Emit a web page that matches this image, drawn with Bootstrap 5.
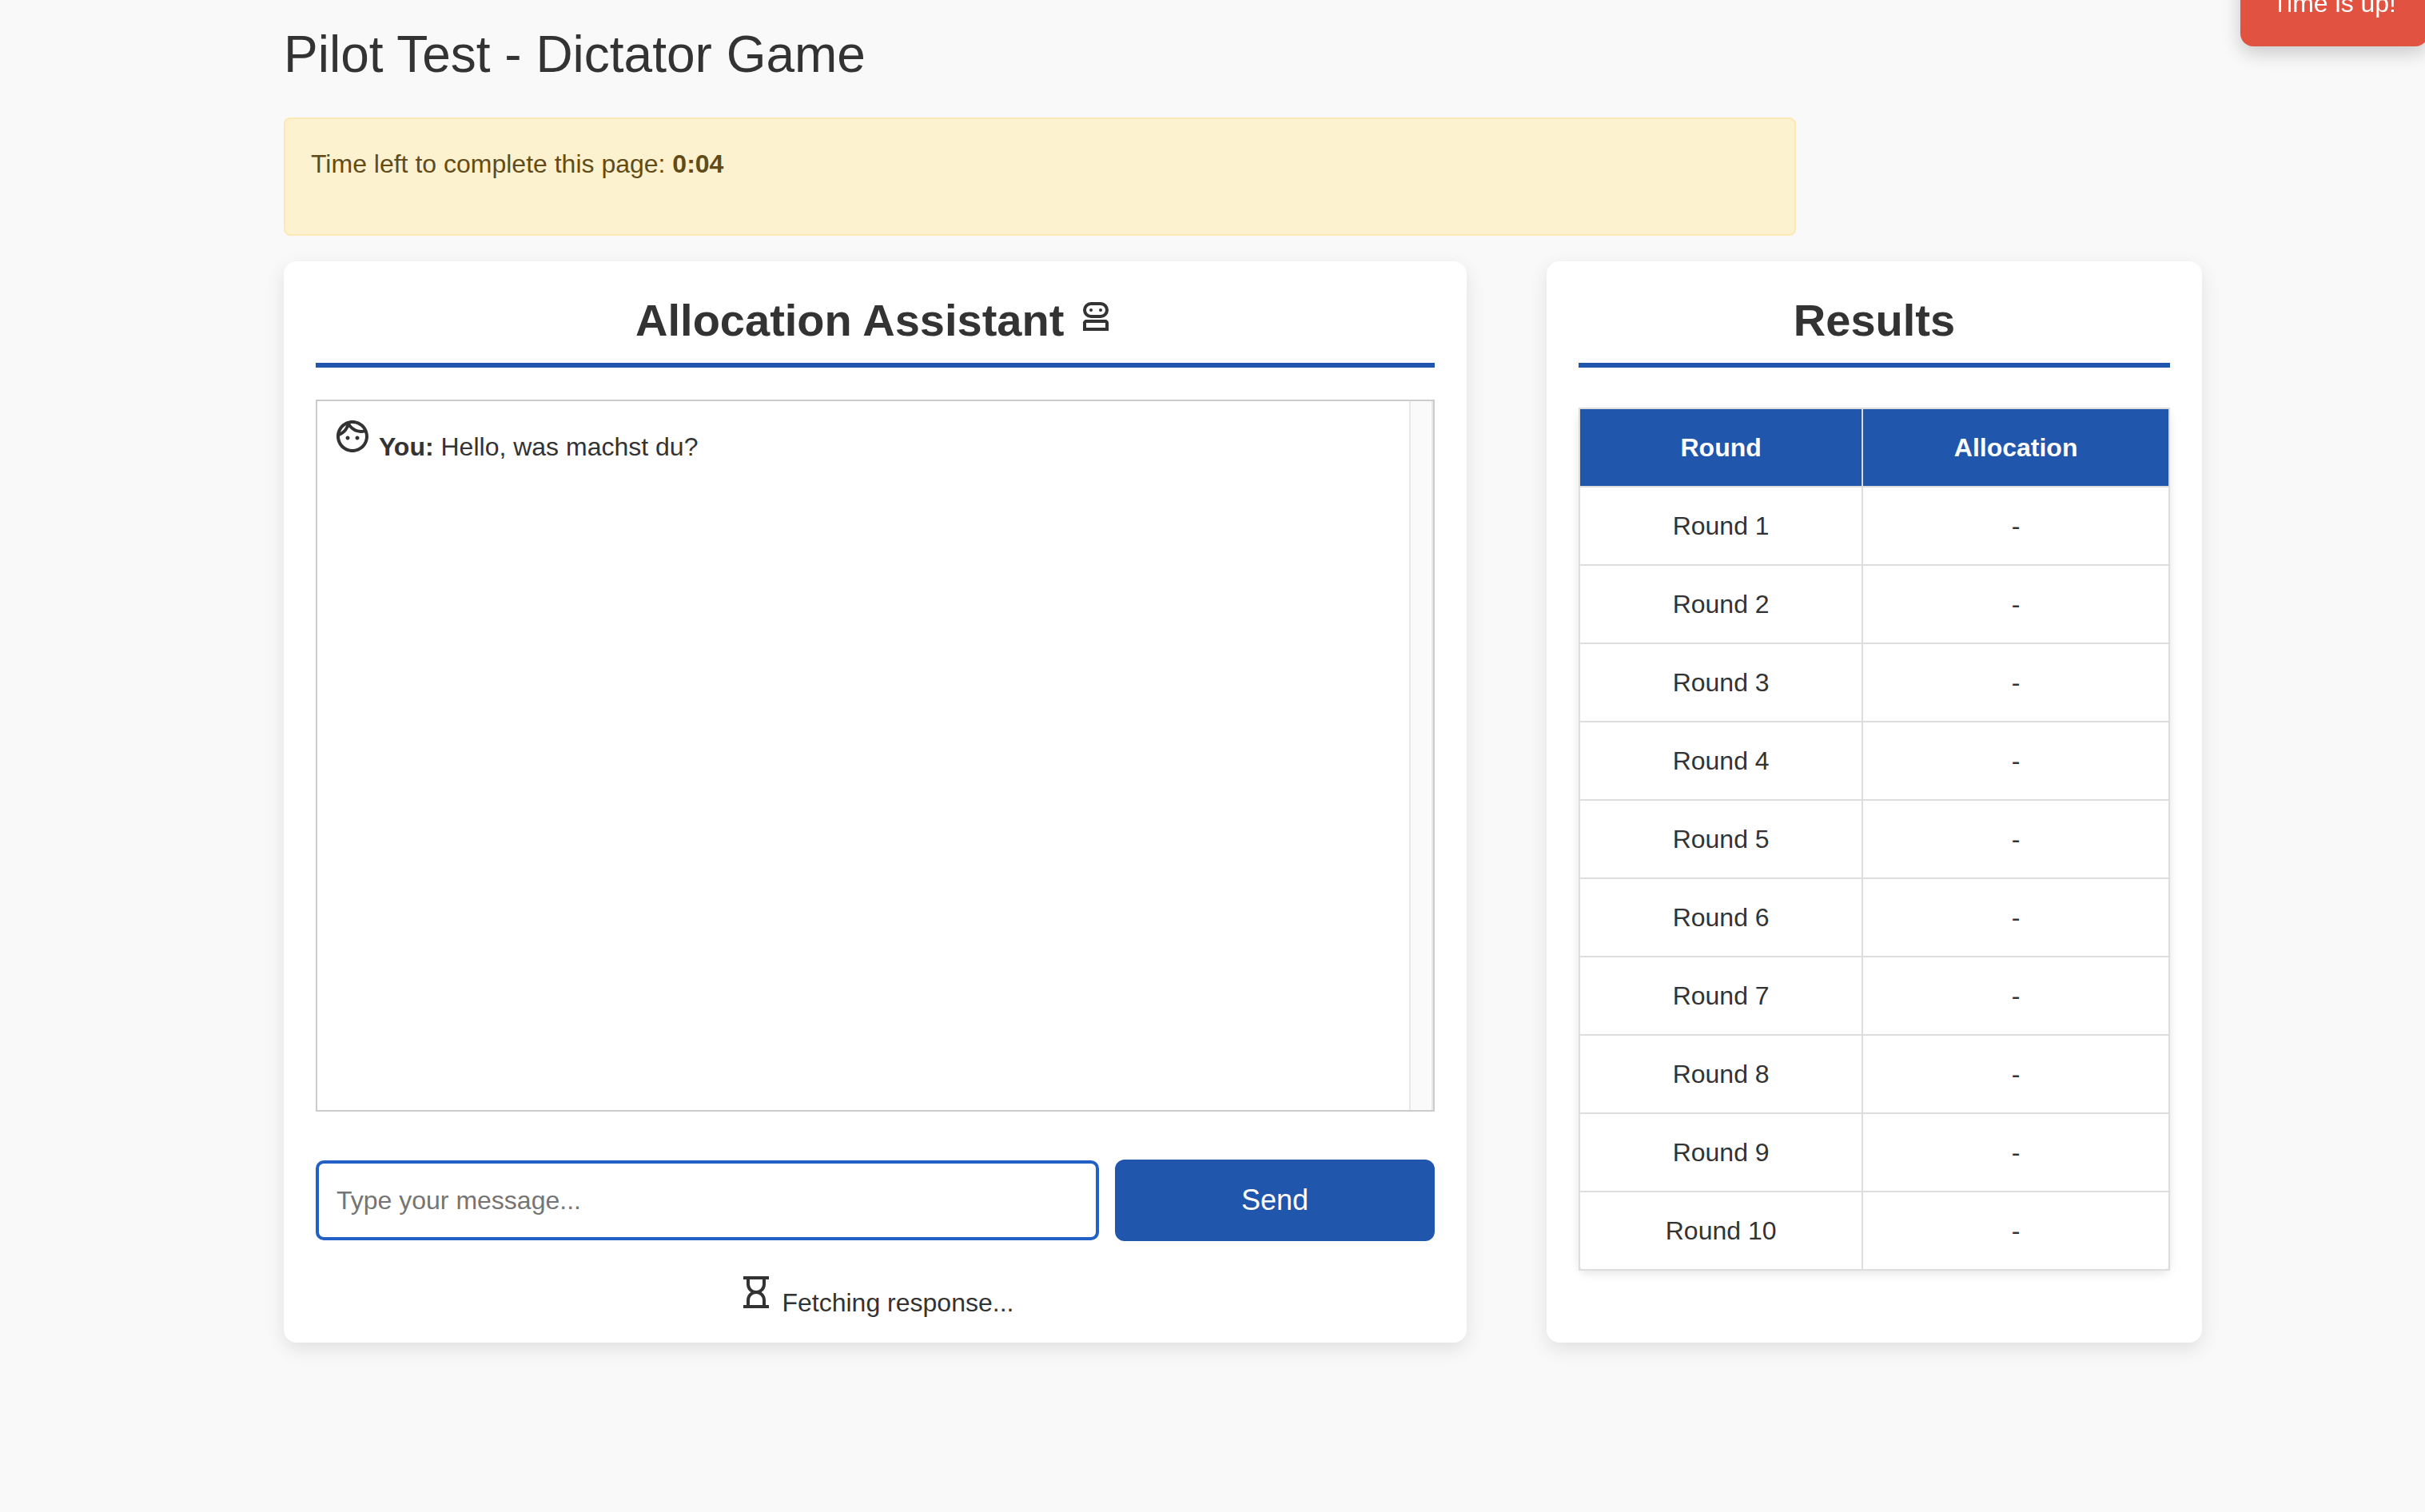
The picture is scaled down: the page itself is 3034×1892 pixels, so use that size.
<!DOCTYPE html>
<html lang="en">
<head>
<meta charset="utf-8">
<meta name="viewport" content="width=device-width, initial-scale=1">
<title>Pilot Test - Dictator Game</title>
<link href="https://cdn.jsdelivr.net/npm/bootstrap@5.3.0/dist/css/bootstrap.min.css" rel="stylesheet">
<style>
  :root { --brand: #2056ab; --ink: #333; }
  body {
    background: #f9f9f9;
    color: var(--ink);
    font-family: "Liberation Sans", Arial, sans-serif;
    font-size: 32px;
    line-height: 48px;
  }
  .page { max-width: 3034px; padding: 30px 279px 80px 355px; }
  .page-title { font-size: 64px; line-height: 77px; margin-bottom: 40px; color: var(--ink); }
  .timer-alert {
    max-width: 1892px;
    padding: 32px;
    margin-bottom: 32px;
    border: 2px solid #fbe8b4;
    border-radius: 8px;
    background: #fdf2d0;
    color: #614c19;
  }
  .timer-alert p { margin-bottom: 32px; }
  .panels { display: grid; grid-template-columns: 74fr 41fr; gap: 100px; }
  .panel {
    background: #fff;
    border: 0;
    border-radius: 16px;
    padding: 40px 40px 26px;
    box-shadow: 0 8px 24px rgba(0, 0, 0, .1);
    color: var(--ink);
  }
  .panel-title {
    font-size: 56px;
    line-height: 67px;
    padding-bottom: 20px;
    margin-bottom: 40px;
    border-bottom: 6px solid var(--brand);
    color: var(--ink);
  }
  .glyph { width: 48px; height: 48px; fill: currentColor; vertical-align: baseline; }
  .chat-box { height: 891px; border: 2px solid #ccc; margin-bottom: 60px; }
  .chat-log { padding: 20px; }
  .chat-track { width: 30px; background: #fafafa; border: solid #e8e8e8; border-width: 0 2px; }
  .chat-form { gap: 20px; }
  .chat-input, .chat-input:focus {
    flex: 1 1 0;
    height: 100px;
    padding: 0 22px;
    font-size: 32px;
    line-height: 48px;
    border: 4px solid #2360c5;
    border-radius: 10px;
    box-shadow: none;
    color: var(--ink);
  }
  .chat-input::placeholder { color: #757575; }
  .send-btn, .send-btn:hover {
    width: 400px;
    height: 102px;
    font-size: 36px;
    line-height: 48px;
    border: 0;
    border-radius: 12px;
    background: var(--brand);
    color: #fff;
  }
  .fetching { margin-top: 40px; }
  .results {
    margin: 50px 0 0;
    table-layout: fixed;
    color: var(--ink);
    border-radius: 12px;
    box-shadow: 0 4px 12px rgba(0, 0, 0, .1);
  }
  .results .round-col { width: 48%; }
  .results th, .results td {
    padding: 24px;
    border: 2px solid #ddd;
    background: transparent;
    color: var(--ink);
    font-weight: 400;
  }
  .results tbody, .results thead, .results tr { border-width: 0; }
  .results thead th { background: var(--brand); color: #fff; font-weight: 700; }
  .time-toast {
    top: -50px;
    right: -4px;
    padding: 30px 40px;
    border-radius: 16px;
    background: #e15241;
    color: #fff;
    box-shadow: 0 8px 24px rgba(0, 0, 0, .2);
    z-index: 10;
  }
</style>
<script src="https://cdn.jsdelivr.net/npm/bootstrap@5.3.0/dist/js/bootstrap.bundle.min.js"></script>
</head>
<body>
<main class="page">
  <h1 class="page-title fw-normal">Pilot Test - Dictator Game</h1>

  <div class="timer-alert" role="timer">
    <p>Time left to complete this page: <strong>0:04</strong></p>
  </div>

  <div class="panels">
    <section class="panel">
      <h2 class="panel-title fw-bold text-center">Allocation Assistant
        <svg class="glyph" viewBox="0 0 24 24" aria-hidden="true"><path fill-rule="evenodd" d="M9 13a5 5 0 0 1 0-10h6a5 5 0 0 1 0 10zm0-2h6a3 3 0 0 0 0-6H9a3 3 0 0 0 0 6zM4 21v-5q0-.825.588-1.413T6 14h12q.825 0 1.413.587T20 16v5zm2-2h12v-3H6z"/><circle cx="9" cy="8" r="1"/><circle cx="15" cy="8" r="1"/></svg></h2>

      <div class="chat-box d-flex">
        <div class="chat-log flex-grow-1">
          <div>
            <svg class="glyph" viewBox="0 0 24 24" aria-hidden="true"><path d="M10.25 13c0 .69-.56 1.25-1.25 1.25S7.75 13.69 7.75 13s.56-1.25 1.25-1.25 1.25.56 1.25 1.25zM15 11.75c-.69 0-1.25.56-1.25 1.25s.56 1.25 1.25 1.25 1.25-.56 1.25-1.25-.56-1.25-1.25-1.25zm7 .25c0 5.52-4.48 10-10 10S2 17.52 2 12 6.48 2 12 2s10 4.48 10 10zM10.66 4.12C12.06 6.44 14.6 8 17.5 8c.46 0 .91-.05 1.34-.12C17.44 5.56 14.9 4 12 4c-.46 0-.91.05-1.34.12zM4.42 9.47c1.71-.97 3.03-2.55 3.66-4.44C6.37 6 5.05 7.58 4.42 9.47zM20 12c0-.78-.12-1.53-.33-2.24-.7.15-1.42.24-2.17.24-3.13 0-5.92-1.44-7.76-3.69C8.69 8.87 6.6 10.88 4 11.86c.01.04 0 .09 0 .14 0 4.41 3.59 8 8 8s8-3.59 8-8z"/></svg>
            <strong>You:</strong> Hello, was machst du?
          </div>
        </div>
        <div class="chat-track"></div>
      </div>

      <form class="chat-form d-flex align-items-center" onsubmit="return false">
        <label class="visually-hidden" for="message">Message</label>
        <input class="chat-input form-control" id="message" type="text" placeholder="Type your message...">
        <button class="send-btn btn" type="submit">Send</button>
      </form>

      <div class="fetching text-center" role="status">
        <svg class="glyph" viewBox="0 0 24 24" aria-hidden="true"><path d="M8 20h8v-3q0-1.65-1.175-2.825T12 13t-2.825 1.175T8 17zm4-9q1.65 0 2.825-1.175T16 7V4H8v3q0 1.65 1.175 2.825T12 11M4 22v-2h2v-3q0-1.525.713-2.863T8.7 12q-1.275-.8-1.987-2.137T6 7V4H4V2h16v2h-2v3q0 1.525-.712 2.863T15.3 12q1.275.8 1.988 2.138T18 17v3h2v2z"/></svg>
        Fetching response...
      </div>
    </section>

    <section class="panel">
      <h2 class="panel-title fw-bold text-center">Results</h2>
      <table class="results table text-center">
        <thead>
          <tr><th class="round-col" scope="col">Round</th><th scope="col">Allocation</th></tr>
        </thead>
        <tbody>
          <tr><td>Round 1</td><td>-</td></tr>
          <tr><td>Round 2</td><td>-</td></tr>
          <tr><td>Round 3</td><td>-</td></tr>
          <tr><td>Round 4</td><td>-</td></tr>
          <tr><td>Round 5</td><td>-</td></tr>
          <tr><td>Round 6</td><td>-</td></tr>
          <tr><td>Round 7</td><td>-</td></tr>
          <tr><td>Round 8</td><td>-</td></tr>
          <tr><td>Round 9</td><td>-</td></tr>
          <tr><td>Round 10</td><td>-</td></tr>
        </tbody>
      </table>
    </section>
  </div>
</main>

<div class="time-toast position-fixed text-nowrap" role="alert">Time is up!</div>
</body>
</html>
